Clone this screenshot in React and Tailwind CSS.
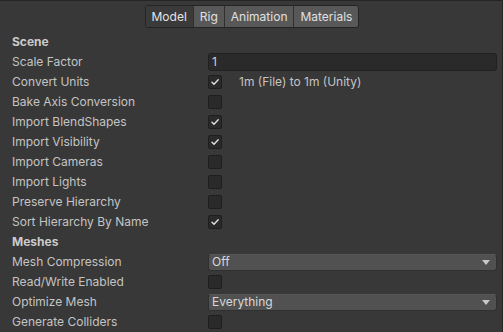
import React from 'react';

const Check = ({ on }) => (
  <div className="w-[14px] h-[14px] rounded-[2px] bg-[#2a2a2a] border border-[#1e1e1e] flex items-center justify-center">
    {on && (
      <svg width="10" height="10" viewBox="0 0 10 10">
        <path d="M2 5.2 L4 7.2 L8.2 2.8" fill="none" stroke="#e2e2e2" strokeWidth="1.4" strokeLinecap="round" strokeLinejoin="round" />
      </svg>
    )}
  </div>
);

const Select = ({ value }) => (
  <div className="flex-1 h-[17px] rounded-[3px] bg-[#515151] border border-[#303030] border-t-[#575757] flex items-center justify-between pl-[3px] pr-[6px] text-[#d8d8d8]">
    <span>{value}</span>
    <svg width="8" height="5" viewBox="0 0 8 5">
      <path d="M0 0 H8 L4 5 Z" fill="#c8c8c8" />
    </svg>
  </div>
);

const Row = ({ label, bold, children }) => (
  <div className="h-5 flex items-center">
    <div className={`w-[208px] shrink-0 pl-3 ${bold ? 'font-bold text-[#cbcbcb]' : 'text-[#c4c4c4]'}`}>{label}</div>
    <div className="flex-1 flex items-center pr-[5px]">{children}</div>
  </div>
);

const tabs = ['Model', 'Rig', 'Animation', 'Materials'];

export default function App() {
  return (
    <div className="w-[503px] h-[332px] bg-[#383838] border-t border-[#262626] border-r border-r-[#262626] overflow-hidden text-[12px] leading-none" style={{ fontFamily: 'Inter, "Liberation Sans", sans-serif' }}>
      <div className="h-[31px] flex items-start justify-center pt-[4px] pl-[2px]">
        <div className="flex h-[23px] rounded-[3px] border border-[#242424] overflow-hidden">
          {tabs.map((t, i) => (
            <div
              key={t}
              className={`px-[6px] flex items-center ${i === 0 ? 'bg-[#3a3a3a] text-[#e4e4e4]' : 'bg-[#585858] text-[#e0e0e0] border-l border-[#303030]'}`}
            >
              {t}
            </div>
          ))}
        </div>
      </div>
      <Row label="Scene" bold />
      <Row label="Scale Factor">
        <div className="flex-1 h-[18px] rounded-[3px] bg-[#2a2a2a] border border-[#212121] flex items-center pl-[3px] text-[#d2d2d2]">1</div>
      </Row>
      <Row label="Convert Units">
        <Check on />
        <span className="ml-[17px] text-[#c4c4c4]">1m (File) to 1m (Unity)</span>
      </Row>
      <Row label="Bake Axis Conversion"><Check /></Row>
      <Row label="Import BlendShapes"><Check on /></Row>
      <Row label="Import Visibility"><Check on /></Row>
      <Row label="Import Cameras"><Check /></Row>
      <Row label="Import Lights"><Check /></Row>
      <Row label="Preserve Hierarchy"><Check /></Row>
      <Row label="Sort Hierarchy By Name"><Check on /></Row>
      <Row label="Meshes" bold />
      <Row label="Mesh Compression"><Select value="Off" /></Row>
      <Row label="Read/Write Enabled"><Check /></Row>
      <Row label="Optimize Mesh"><Select value="Everything" /></Row>
      <Row label="Generate Colliders"><Check /></Row>
    </div>
  );
}
